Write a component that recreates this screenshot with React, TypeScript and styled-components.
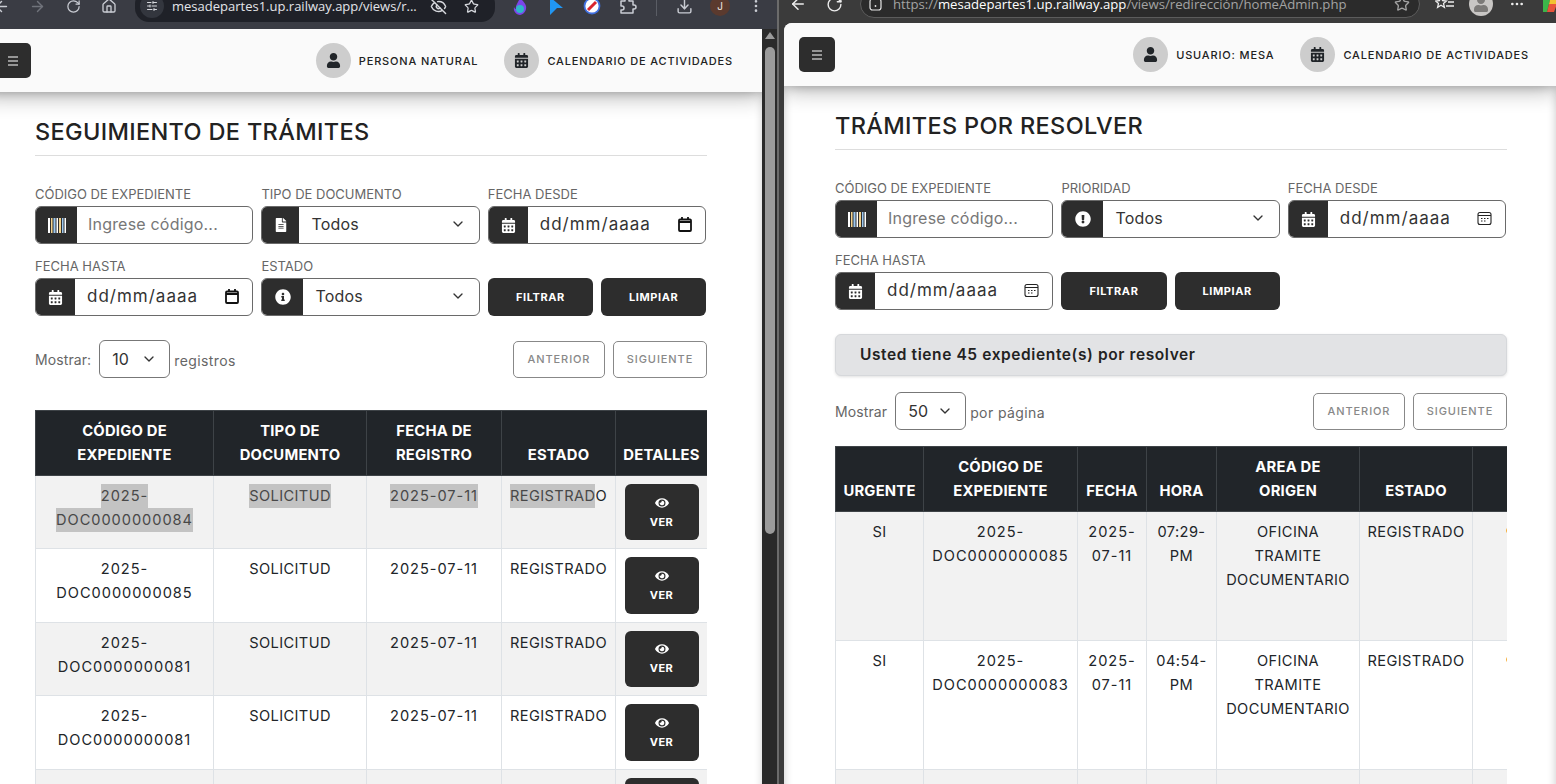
import React from "react";
import styled, { createGlobalStyle } from "styled-components";
import { ArrowLeft, ArrowRight, RotateCw, Home, SlidersHorizontal, EyeOff, Star, Download, MoreVertical, MoreHorizontal, ChevronDown } from "lucide-react";
import { FaFileAlt, FaCalendarAlt, FaInfoCircle, FaExclamationCircle, FaEye, FaUser, FaCircle } from "react-icons/fa";

const Global = createGlobalStyle`
  html, body { margin: 0; padding: 0; background: #3b3b3b; overflow: hidden; }
  * { box-sizing: border-box; }
`;

const FONT = `Inter, "Open Sans", "Liberation Sans", sans-serif`;

const Desktop = styled.div`
  width: 1556px; height: 784px; display: flex; overflow: hidden;
  background: #3b3b3b; font-family: ${FONT};
`;
const LeftWindow = styled.div`
  width: 777px; height: 784px; flex: none; display: flex; flex-direction: column; overflow: hidden;
`;
const Divider = styled.div`width: 2px; flex: none; background: #6b6b6b;`;
const RightWindow = styled.div`
  flex: 1; min-width: 0; height: 784px; display: flex; flex-direction: column; overflow: hidden;
`;
const Toolbar = styled.div<{ $h: number; $cy: number; $bg: string; $ml: number }>`
  height: ${p => p.$h}px; flex: none; display: flex; align-items: center;
  padding-bottom: ${p => p.$h - 2 * p.$cy}px; padding-left: ${p => p.$ml}px;
  background: ${p => p.$bg}; color: #c9ccd3;
`;
const Slot = styled.div<{ $w?: number; $dim?: boolean; $ml?: number }>`
  width: ${p => p.$w ?? 36}px; flex: none; display: flex; align-items: center; justify-content: center;
  margin-left: ${p => p.$ml ?? 0}px; color: ${p => (p.$dim ? "#70737b" : "inherit")};
`;
const LeftShift = styled.div`width: 0; margin-left: -17px; flex: none;`;
const Address = styled.div<{ $w: number; $bg: string; $border?: string; $h: number; $ml: number }>`
  width: ${p => p.$w}px; height: ${p => p.$h}px; flex: none; margin-left: ${p => p.$ml}px; border-radius: 14px;
  background: ${p => p.$bg}; border: ${p => (p.$border ? `1px solid ${p.$border}` : "none")};
  display: flex; align-items: center;
`;
const TuneChip = styled.div`
  width: 24px; height: 24px; border-radius: 50%; background: #33363e; margin-left: 5px; flex: none;
  display: flex; align-items: center; justify-content: center; color: #d6d8dd;
`;
const UrlText = styled.div<{ $ml: number; $w: number; $fs: number }>`
  margin-left: ${p => p.$ml}px; width: ${p => p.$w}px; flex: none; font-family: "Open Sans", sans-serif;
  font-size: ${p => p.$fs}px; color: #e3e5ea; white-space: nowrap; overflow: hidden;
`;
const UrlDim = styled.span`color: #a3a3a3;`;
const UrlBright = styled.span`color: #ffffff;`;
const BarIcon = styled.div<{ $ml?: number }>`
  flex: none; margin-left: ${p => p.$ml ?? 0}px; display: flex; align-items: center; color: #d6d8dd;
`;
const ToolSep = styled.div`width: 1px; height: 20px; background: #5a5d65;`;
const Avatar = styled.div`
  width: 20px; height: 20px; border-radius: 50%; background: #5b3a2e; color: #f0e6e0;
  font-size: 10px; display: flex; align-items: center; justify-content: center;
`;
const ProfileDisc = styled.div`
  width: 24px; height: 24px; border-radius: 50%; background: #c8c6c4; overflow: hidden;
  display: flex; align-items: center; justify-content: center; color: #7c7a78;
`;

const LeftBody = styled.div`flex: 1; min-height: 0; display: flex;`;
const Viewport = styled.div<{ $ml?: number; $round?: boolean }>`
  flex: 1; min-width: 0; min-height: 0; overflow: hidden; background: #fff; margin-left: ${p => p.$ml ?? 0}px;
  border-top-left-radius: ${p => (p.$round ? 8 : 0)}px;
`;
const Scrollbar = styled.div`
  width: 15px; flex: none; background: #2a2a2a; display: flex; flex-direction: column; align-items: center;
  padding-top: 3px;
`;
const ScrollThumb = styled.div`
  width: 10px; height: 487px; margin-top: 8px; background: #9b9b9b; border-radius: 5px;
`;

const PageBox = styled.div<{ $w: number; $ml: number }>`
  width: ${p => p.$w}px; margin-left: ${p => p.$ml}px;
`;
const NavBar = styled.div<{ $pl: number; $pr: number }>`
  height: 63px; background: #fafafa; display: flex; align-items: center; justify-content: space-between;
  padding: 0 ${p => p.$pr}px 0 ${p => p.$pl}px; position: relative; z-index: 2;
  box-shadow: 0 4px 22px rgba(0, 0, 0, 0.32);
`;
const MenuButton = styled.div`
  width: 36px; height: 35px; background: #2d2d2d; border-radius: 5px; display: flex; align-items: center; justify-content: center;
`;
const NavItems = styled.div`display: flex; align-items: center; gap: 26px;`;
const NavItem = styled.div`display: flex; align-items: center; gap: 8px;`;
const NavDisc = styled.div`
  width: 35px; height: 35px; border-radius: 50%; background: #cdcdcd; color: #212529;
  display: flex; align-items: center; justify-content: center; font-size: 15px;
`;
const NavLabel = styled.span`font-size: 11px; font-weight: 500; letter-spacing: 0.84px; color: #222; white-space: nowrap;`;

const Content = styled.div<{ $pl: number }>`
  padding: 24px 0 0 ${p => p.$pl}px; background: #fff; height: 800px;
  box-shadow: inset 0 0 10px rgba(0, 0, 0, 0.22);
`;
const Inner = styled.div`width: 672px;`;
const Heading = styled.h1`
  margin: 0; height: 40px; font-size: 23.5px; line-height: 32px; font-weight: 500; color: #222; letter-spacing: 0.34px;
  border-bottom: 1px solid #ddd;
`;
const FilterGrid = styled.div`
  margin-top: 28px; display: grid; grid-template-columns: repeat(3, 218.4px); column-gap: 8px; row-gap: 12px;
`;
const Field = styled.div`display: flex; flex-direction: column; gap: 2px;`;
const FieldLabel = styled.label`
  font-size: 13px; line-height: 20px; color: #666; white-space: nowrap;
`;
const Group = styled.div`
  height: 38px; display: flex; border: 1px solid #6a6a6a; border-radius: 6px; overflow: hidden; background: #fff;
`;
const Prepend = styled.div<{ $w: number }>`
  width: ${p => p.$w}px; flex: none; background: #2d2d2d; color: #fff; display: flex; align-items: center; justify-content: center;
  font-size: 15px;
`;
const TextInput = styled.input`
  flex: 1; min-width: 0; border: 0; outline: 0; padding: 0 0 2px 11px; font: 400 16px ${FONT}; letter-spacing: 0.2px; color: #333; background: transparent;
  &::placeholder { color: #777; opacity: 1; }
`;
const Value = styled.div`
  flex: 1; min-width: 0; display: flex; align-items: center; justify-content: space-between;
  padding: 0 13px 2px 12px; font-size: 16px; letter-spacing: 0.2px; color: #333;
`;
const DateText = styled.span`font-size: 17px; letter-spacing: 1px;`;
const FilterActions = styled.div`display: flex; gap: 8px; align-self: end;`;
const SolidButton = styled.button`
  flex: 1; height: 38px; border: 0; border-radius: 6px; background: #2d2d2d; color: #fff;
  font: 700 11px ${FONT}; letter-spacing: 0.6px; padding: 0;
`;
const Notice = styled.div`
  margin-top: 24px; height: 42px; display: flex; align-items: center; padding: 0 0 2px 24px;
  background: #e2e3e5; border: 1px solid #d6d8db; border-radius: 6px; box-shadow: 0 1px 3px rgba(0, 0, 0, 0.12);
  font-size: 15.5px; letter-spacing: 0.6px; font-weight: 600; color: #222;
`;
const PagerRow = styled.div<{ $mt: number }>`
  margin-top: ${p => p.$mt}px; height: 38px; display: flex; align-items: center; justify-content: space-between;
`;
const ShowGroup = styled.div`display: flex; align-items: center; gap: 8px; font-size: 14px; letter-spacing: 0.1px; color: #666;`;
const SideText = styled.span`margin-left: -4px; padding-top: 2px; letter-spacing: 0.4px;`;
const PageSelect = styled.div`
  width: 71px; height: 38px; border: 1px solid #777; border-radius: 6px; display: flex; align-items: center; justify-content: space-between;
  padding: 0 12px; font-size: 16px; color: #333; background: #fff;
`;
const PagerButtons = styled.div`display: flex; gap: 8px;`;
const GhostButton = styled.button<{ $w: number }>`
  width: ${p => p.$w}px; height: 37px; border: 1px solid #888; border-radius: 5px; background: #fff; color: #888;
  font: 500 11px ${FONT}; letter-spacing: 0.9px; padding: 0;
`;
const TableFrame = styled.div<{ $mt: number }>`margin-top: ${p => p.$mt}px; width: 672px; overflow: hidden;`;
const Table = styled.table<{ $w: number }>`
  width: ${p => p.$w}px; table-layout: fixed; border-collapse: collapse; font-size: 14.6px; line-height: 24px; color: #212529;
`;
const Th = styled.th`
  background: #212529; border: 1px solid #3e4347; color: #fff; font-weight: 700; font-size: 14.8px; letter-spacing: 0.2px;
  vertical-align: bottom; text-align: center; padding: 8px 2px 8px; white-space: nowrap;
`;
const Tr = styled.tr<{ $striped: boolean }>`background: ${p => (p.$striped ? "#f2f2f2" : "#fff")};`;
const Td = styled.td`
  border: 1px solid #dee2e6; vertical-align: top; text-align: center; padding: 8px 2px; white-space: nowrap; letter-spacing: 0.4px;
`;
const TdTall = styled(Td)`height: 129px;`;
const TdClipped = styled(Td)`text-align: left; padding-left: 33px; color: #f5a623; font-size: 9px;`;
const Num = styled.span`letter-spacing: 0.95px;`;
const Picked = styled.span`background: #c3c3c3; color: #484848; display: inline-block;`;
const ViewButton = styled.button`
  width: 74px; height: 56.4px; border: 0; border-radius: 6px; background: #2d2d2d; color: #fff;
  display: flex; flex-direction: column; align-items: center; justify-content: center; gap: 5px; margin: 0 auto;
  font: 700 11px ${FONT}; letter-spacing: 0.4px; padding: 0;
`;

const Hamburger = () => (
  <svg width="10" height="10" viewBox="0 0 10 10" fill="none" stroke="#fff" strokeWidth="1.2">
    <path d="M0 1h10M0 5h10M0 9h10" />
  </svg>
);
const Barcode = () => (
  <svg width="18" height="15" viewBox="0 0 18 15">
    <rect x="0" width="2" height="15" fill="#fff" />
    <rect x="3" width="1.5" height="15" fill="#f2d28c" />
    <rect x="5.5" width="2" height="15" fill="#9cc7ee" />
    <rect x="8.5" width="1.5" height="15" fill="#fff" />
    <rect x="11" width="2" height="15" fill="#f2d28c" />
    <rect x="14" width="1.5" height="15" fill="#9cc7ee" />
    <rect x="16.5" width="1.5" height="15" fill="#fff" />
  </svg>
);
const Flame = () => (
  <svg width="14" height="18" viewBox="0 0 14 18">
    <path d="M7 0c1 3 5 5 6 9 1 5-3 9-6 9s-7-3-6-8c.5 1 1 2 2 2C2 8 6 5 7 0z" fill="#7b45e8" />
    <circle cx="7" cy="12" r="4" fill="#2fb6c9" />
  </svg>
);
const BlueCursor = () => (
  <svg width="14" height="18" viewBox="0 0 14 18"><path d="M1 0l13 11-6 0-7 7z" fill="#2196f3" /></svg>
);
const NoSign = () => (
  <svg width="18" height="18" viewBox="0 0 18 18">
    <circle cx="9" cy="9" r="8.4" fill="#3f6fe0" />
    <circle cx="9" cy="9" r="6.6" fill="#fff" />
    <path d="M5 13L13 5" stroke="#d8252f" strokeWidth="3" />
  </svg>
);
const ChromePuzzle = () => (
  <svg width="18" height="18" viewBox="0 0 18 18" fill="none" stroke="#c9ccd3" strokeWidth="1.5" strokeLinejoin="round">
    <path d="M2 4h4V3a2 2 0 0 1 4 0v1h4v4h1a2 2 0 0 1 0 4h-1v4H2v-3h1a2 2 0 0 0 0-4H2z" />
  </svg>
);
const Collections = () => (
  <svg width="20" height="16" viewBox="0 0 20 16" fill="none" stroke="#ececec" strokeWidth="1.3">
    <path d="M6 1l1.6 3.6 3.8.4-2.9 2.5.9 3.8L6 9.3 2.6 11.3l.9-3.8L.6 5l3.8-.4z" />
    <path d="M12 2h7M13 6h6M11 10h8" />
  </svg>
);
const Copilot = () => (
  <svg width="20" height="20" viewBox="0 0 20 20">
    <path d="M2 2h8L6 18H2z" fill="#3bb54a" />
    <path d="M10 2h8l-2 8H8z" fill="#f2c230" />
    <path d="M6 18l2-8h8l-3 8z" fill="#e8533a" />
  </svg>
);
const SiteChip = () => (
  <svg width="13" height="13" viewBox="0 0 13 13" fill="none" stroke="#e6e6e6" strokeWidth="1.2">
    <rect x="1" y="1" width="11" height="11" rx="2.5" />
    <circle cx="6.5" cy="8" r="0.9" fill="#e6e6e6" stroke="none" />
  </svg>
);
const ThinCalendar = () => (
  <svg width="15" height="15" viewBox="0 0 15 15" fill="none" stroke="#222" strokeWidth="1.1">
    <rect x="1" y="1.5" width="13" height="12" rx="2" />
    <path d="M1 4.5h13" />
    <path d="M4 7.5h1.5M7 7.5h1.5M10 7.5h1.5M4 10h1.5M7 10h1.5" />
  </svg>
);
const SolidCalendar = () => (
  <svg width="14" height="15" viewBox="0 0 14 15" fill="none" stroke="#111" strokeWidth="1.8">
    <rect x="1" y="2.5" width="12" height="11.5" rx="1" />
    <path d="M1 5h12M4 0v2.5M10 0v2.5" />
  </svg>
);

type FilterProps = {
  secondLabel: string;
  secondIcon: React.ReactNode;
  secondW: number;
  estado: boolean;
  chromeCalendar: boolean;
};

const DateValue = ({ thin }: { thin: boolean }) => (
  <Value><DateText>dd/mm/aaaa</DateText>{thin ? <ThinCalendar /> : <SolidCalendar />}</Value>
);

const Filters = ({ secondLabel, secondIcon, secondW, estado, chromeCalendar }: FilterProps) => (
  <FilterGrid>
    <Field>
      <FieldLabel>CÓDIGO DE EXPEDIENTE</FieldLabel>
      <Group>
        <Prepend $w={41}><Barcode /></Prepend>
        <TextInput placeholder="Ingrese código..." />
      </Group>
    </Field>
    <Field>
      <FieldLabel>{secondLabel}</FieldLabel>
      <Group>
        <Prepend $w={secondW}>{secondIcon}</Prepend>
        <Value>Todos<ChevronDown size={16} color="#333" /></Value>
      </Group>
    </Field>
    <Field>
      <FieldLabel>FECHA DESDE</FieldLabel>
      <Group>
        <Prepend $w={39}><FaCalendarAlt size={15} /></Prepend>
        <DateValue thin={chromeCalendar} />
      </Group>
    </Field>
    <Field>
      <FieldLabel>FECHA HASTA</FieldLabel>
      <Group>
        <Prepend $w={39}><FaCalendarAlt size={15} /></Prepend>
        <DateValue thin={chromeCalendar} />
      </Group>
    </Field>
    {estado && (
      <Field>
        <FieldLabel>ESTADO</FieldLabel>
        <Group>
          <Prepend $w={41}><FaInfoCircle size={16} /></Prepend>
          <Value>Todos<ChevronDown size={16} color="#333" /></Value>
        </Group>
      </Field>
    )}
    <FilterActions>
      <SolidButton>FILTRAR</SolidButton>
      <SolidButton>LIMPIAR</SolidButton>
    </FilterActions>
  </FilterGrid>
);

const Pager = ({ mt, count, prefix, suffix }: { mt: number; count: string; prefix: string; suffix: string }) => (
  <PagerRow $mt={mt}>
    <ShowGroup>
      <span>{prefix}</span>
      <PageSelect>{count}<ChevronDown size={16} color="#333" /></PageSelect>
      <SideText>{suffix}</SideText>
    </ShowGroup>
    <PagerButtons>
      <GhostButton $w={92}>ANTERIOR</GhostButton>
      <GhostButton $w={94}>SIGUIENTE</GhostButton>
    </PagerButtons>
  </PagerRow>
);

const Nav = ({ pl, pr, who }: { pl: number; pr: number; who: string }) => (
  <NavBar $pl={pl} $pr={pr}>
    <MenuButton><Hamburger /></MenuButton>
    <NavItems>
      <NavItem><NavDisc><FaUser /></NavDisc><NavLabel>{who}</NavLabel></NavItem>
      <NavItem><NavDisc><FaCalendarAlt /></NavDisc><NavLabel>CALENDARIO DE ACTIVIDADES</NavLabel></NavItem>
    </NavItems>
  </NavBar>
);

const leftRows = ["0000000084", "0000000085", "0000000081", "0000000081", "0000000080"];

const LeftTable = () => (
  <TableFrame $mt={32}>
    <Table $w={672}>
      <colgroup>
        <col width={178} /><col width={153} /><col width={135} /><col width={114} /><col width={92} />
      </colgroup>
      <thead>
        <tr>
          <Th>CÓDIGO DE<br />EXPEDIENTE</Th>
          <Th>TIPO DE<br />DOCUMENTO</Th>
          <Th>FECHA DE<br />REGISTRO</Th>
          <Th>ESTADO</Th>
          <Th>DETALLES</Th>
        </tr>
      </thead>
      <tbody>
        {leftRows.map((code, i) => (
          <Tr key={i} $striped={i % 2 === 0}>
            {i === 0 ? (
              <>
                <Td><Picked><Num>2025-</Num></Picked><br /><Picked><Num>DOC{code}</Num></Picked></Td>
                <Td><Picked>SOLICITUD</Picked></Td>
                <Td><Picked><Num>2025-07-11</Num></Picked></Td>
                <Td><Picked>REGISTRAD</Picked>O</Td>
              </>
            ) : (
              <>
                <Td><Num>2025-<br />DOC{code}</Num></Td>
                <Td>SOLICITUD</Td>
                <Td><Num>2025-07-11</Num></Td>
                <Td>REGISTRADO</Td>
              </>
            )}
            <Td><ViewButton><FaEye size={14} />VER</ViewButton></Td>
          </Tr>
        ))}
      </tbody>
    </Table>
  </TableFrame>
);

const rightRows = [
  { code: "0000000085", time: "07:29-" },
  { code: "0000000083", time: "04:54-" },
  { code: "0000000082", time: "03:10-" },
];

const RightTable = () => (
  <TableFrame $mt={16}>
    <Table $w={800}>
      <colgroup>
        <col width={88} /><col width={154} /><col width={69} /><col width={70} /><col width={143} /><col width={113} /><col width={163} />
      </colgroup>
      <thead>
        <tr>
          <Th>URGENTE</Th>
          <Th>CÓDIGO DE<br />EXPEDIENTE</Th>
          <Th>FECHA</Th>
          <Th>HORA</Th>
          <Th>AREA DE<br />ORIGEN</Th>
          <Th>ESTADO</Th>
          <Th />
        </tr>
      </thead>
      <tbody>
        {rightRows.map((r, i) => (
          <Tr key={i} $striped={i % 2 === 0}>
            <TdTall>SI</TdTall>
            <TdTall><Num>2025-<br />DOC{r.code}</Num></TdTall>
            <TdTall><Num>2025-<br />07-11</Num></TdTall>
            <TdTall>{r.time}<br />PM</TdTall>
            <TdTall>OFICINA<br />TRAMITE<br />DOCUMENTARIO</TdTall>
            <TdTall>REGISTRADO</TdTall>
            <TdClipped><FaCircle /></TdClipped>
          </Tr>
        ))}
      </tbody>
    </Table>
  </TableFrame>
);

export default function App() {
  return (
    <Desktop>
      <Global />
      <LeftWindow>
        <Toolbar $h={29} $cy={6} $bg="#3a3c44" $ml={0}>
          <LeftShift />
          <Slot><ArrowLeft size={17} /></Slot>
          <Slot $dim><ArrowRight size={17} /></Slot>
          <Slot><RotateCw size={15} /></Slot>
          <Slot><Home size={16} /></Slot>
          <Address $w={360} $h={32} $bg="#1f2128" $ml={8}>
            <TuneChip><SlidersHorizontal size={12} /></TuneChip>
            <UrlText $ml={8} $w={246} $fs={13}>mesadepartes1.up.railway.app/views/r...</UrlText>
            <BarIcon $ml={12}><EyeOff size={17} /></BarIcon>
            <BarIcon $ml={17}><Star size={15} /></BarIcon>
          </Address>
          <Slot $ml={7}><Flame /></Slot>
          <Slot><BlueCursor /></Slot>
          <Slot><NoSign /></Slot>
          <Slot><ChromePuzzle /></Slot>
          <Slot $w={20}><ToolSep /></Slot>
          <Slot><Download size={17} /></Slot>
          <Slot><Avatar>J</Avatar></Slot>
          <Slot><MoreVertical size={16} /></Slot>
        </Toolbar>
        <LeftBody>
          <Viewport>
            <PageBox $w={783} $ml={-20}>
              <Nav pl={15} pr={30} who="PERSONA NATURAL" />
              <Content $pl={55}>
                <Inner>
                  <Heading>SEGUIMIENTO DE TRÁMITES</Heading>
                  <Filters secondLabel="TIPO DE DOCUMENTO" secondIcon={<FaFileAlt size={14} />} secondW={37} estado chromeCalendar={false} />
                  <Pager mt={24} count="10" prefix="Mostrar:" suffix="registros" />
                  <LeftTable />
                </Inner>
              </Content>
            </PageBox>
          </Viewport>
          <Scrollbar>
            <svg width="10" height="7" viewBox="0 0 10 7"><path d="M5 0l5 7H0z" fill="#9b9b9b" /></svg>
            <ScrollThumb />
          </Scrollbar>
        </LeftBody>
      </LeftWindow>
      <Divider />
      <RightWindow>
        <Toolbar $h={23} $cy={4} $bg="#3b3b3b" $ml={1}>
          <Slot><ArrowLeft size={18} color="#ececec" /></Slot>
          <Slot><RotateCw size={17} color="#ececec" /></Slot>
          <Address $w={560} $h={28} $bg="#2b2b2b" $border="#5c5c5c" $ml={8}>
            <BarIcon $ml={8}><SiteChip /></BarIcon>
            <UrlText $ml={11} $w={470} $fs={13.17}><UrlDim>https://</UrlDim><UrlBright>mesadepartes1.up.railway.app</UrlBright><UrlDim>/views/redirección/homeAdmin.php</UrlDim></UrlText>
            <BarIcon $ml={31}><Star size={16} color="#a3a3a3" /></BarIcon>
          </Address>
          <Slot $ml={7}><Collections /></Slot>
          <Slot><ProfileDisc><FaUser size={16} /></ProfileDisc></Slot>
          <Slot><MoreHorizontal size={16} color="#ececec" /></Slot>
          <Slot $ml={-2}><Copilot /></Slot>
        </Toolbar>
        <Viewport $ml={5} $round>
          <PageBox $w={772} $ml={0}>
            <Nav pl={15} pr={27} who="USUARIO: MESA" />
            <Content $pl={51}>
              <Inner>
                <Heading>TRÁMITES POR RESOLVER</Heading>
                <Filters secondLabel="PRIORIDAD" secondIcon={<FaExclamationCircle size={16} />} secondW={41} estado={false} chromeCalendar />
                <Notice>Usted tiene 45 expediente(s) por resolver</Notice>
                <Pager mt={16} count="50" prefix="Mostrar" suffix="por página" />
                <RightTable />
              </Inner>
            </Content>
          </PageBox>
        </Viewport>
      </RightWindow>
    </Desktop>
  );
}
